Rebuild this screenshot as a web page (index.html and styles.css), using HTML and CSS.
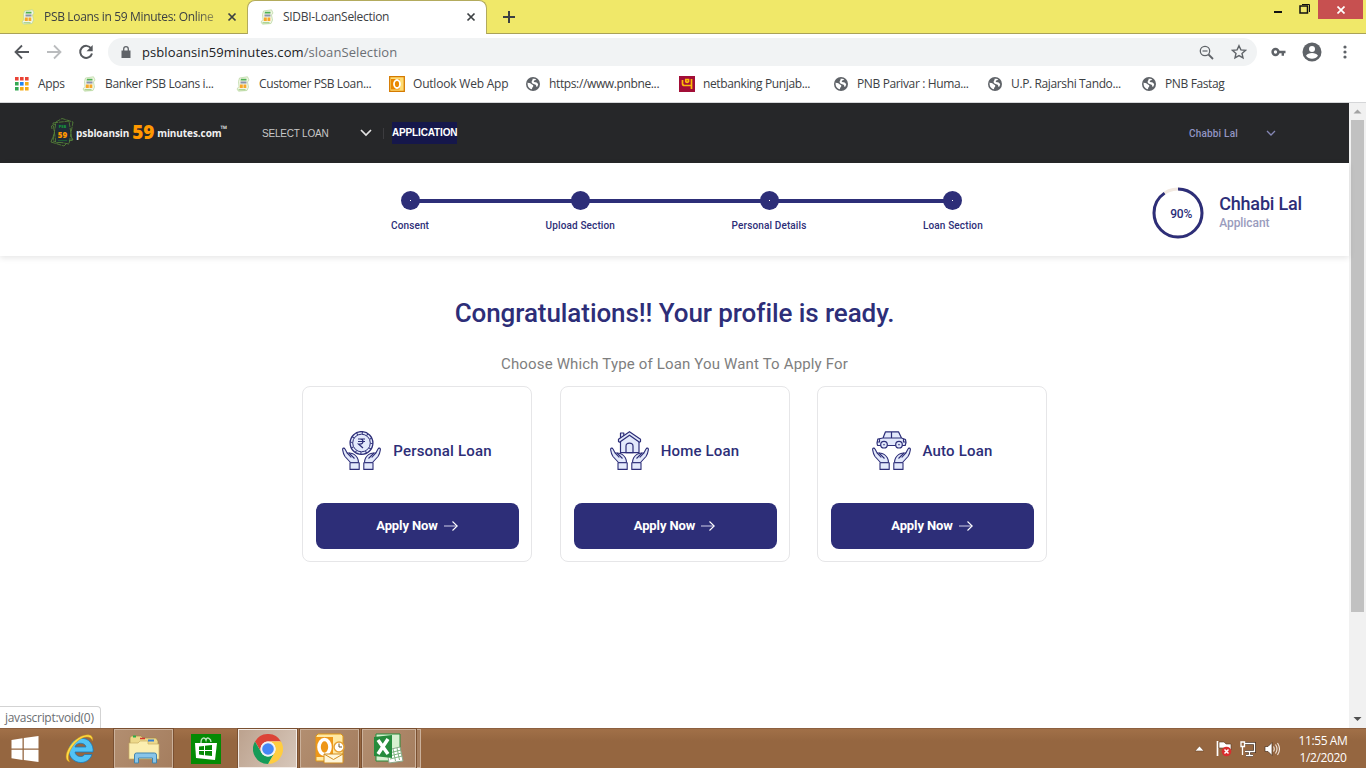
FILE: index.html
```html
<!DOCTYPE html>
<html lang="en">
<head>
<meta charset="utf-8">
<title>SIDBI-LoanSelection</title>
<link rel="stylesheet" href="styles.css">
</head>
<body>
<svg class="defs" width="0" height="0">
  <symbol id="fav" viewBox="0 0 16 16">
    <path d="M4.500 2 12.500.8l1.500 3.200-1.500 2 1 5-1.500 3.500-8.500.7-1.500-2.200 2-2.500-.5-5z" fill="#f3f6e4" stroke="#b4d59c" stroke-width=".7"/>
    <path d="M6 2.800h5.500v1.700H5.500z" fill="#4fb154"/><path d="M5.500 5.500h6v2h-6z" fill="#8a93ab"/>
    <path d="M5 8.500h2.800v3.500H4.700zM8.500 8.500h2.800v3.500H8.500z" fill="#f6a828"/><path d="M3.500 13.300h7v1h-7z" fill="#8fc673"/>
  </symbol>
  <symbol id="globe" viewBox="0 0 16 16">
    <circle cx="8" cy="8" r="7" fill="#5f6368"/>
    <path d="M2.700 6.500c1.200 1 2.400.2 3.300 1.300.6 1 2.200.7 2.300 1.900.1 1.500-1.500 1.500-1.300 3.600-3-.3-5-3.600-4.300-6.800zM7.500 2.800c1.200-.4 3 0 3.800.8-.7 1-2 .6-2.500 1.500-.5 1 1 1.200 2 1.200 1.300.2 1.500 1.400 2.400 1.600-.2 1.600-.8 2.500-1.600 3.200-.4-1.300-.4-2.300-1.700-2.600C8 8 6.500 7.300 6.600 5.800c.1-1.300 1.500-1.500.9-3z" fill="#fff"/>
  </symbol>
  <symbol id="x" viewBox="0 0 10 10"><path d="M1.500 1.500l7 7m0-7l-7 7" stroke="#3c4043" stroke-width="1.700"/></symbol>
  <symbol id="hands" viewBox="0 0 39 39">
    <g id="hand" fill="#e3e9fb" stroke="#2d2e78" stroke-width="1.100" stroke-linejoin="round">
      <path d="M8.500 31.500 3 25.500C1.700 23.800.9 20.500.6 18.600c-.1-1.800 1.800-2 2.400-.6L5 21.800l4 .4c3 .4 5 2.500 6.300 4.600.9 1.700 1.200 3 1.200 4.700z"/>
      <path d="M5 21.800l4.300 4.700M7 22l5.500 5.500" fill="none"/>
      <path d="M8 31.700h9.200v6.700H8z"/>
    </g>
    <use href="#hand" transform="matrix(-1 0 0 1 39 0)"/>
  </symbol>
  <symbol id="arrow" viewBox="0 0 16 12"><path d="M1 6h13" stroke="#b5b5d6" stroke-width="1.200"/><path d="M9.500 1.500 14.200 6l-4.700 4.500" stroke="#fff" stroke-width="1.100" fill="none"/></symbol>
</svg>

<header class="tabs">
  <div class="tab">
    <svg class="i16"><use href="#fav"/></svg><span class="tab-title t1">PSB Loans in 59 Minutes: Online</span><svg class="close"><use href="#x"/></svg>
  </div>
  <div class="tab active">
    <svg class="i16"><use href="#fav"/></svg><span class="tab-title t2">SIDBI-LoanSelection</span><svg class="close"><use href="#x"/></svg>
  </div>
  <svg class="plus" viewBox="0 0 12 12"><path d="M6 0v12M0 6h12" stroke="#3c4043" stroke-width="2"/></svg>
  <div class="window-buttons">
    <svg width="10" height="20"><path d="M1 12h8" stroke="#111" stroke-width="2"/></svg>
    <svg width="12" height="20" fill="none" stroke="#111"><path d="M1 6h7.500v7H1z" stroke-width="1.500"/><path d="M3 4.500h7.500V12"/></svg>
    <div class="win-close"><svg width="8" height="8"><path d="M.5.5l7 7m0-7l-7 7" stroke="#fff" stroke-width="1.700"/></svg></div>
  </div>
</header>

<div class="toolbar">
  <svg class="nav-ic" viewBox="0 0 16 16"><path d="M15 8H2M8 1.500 1.500 8 8 14.500" fill="none" stroke="#55585d" stroke-width="1.800"/></svg>
  <svg class="nav-ic" viewBox="0 0 16 16"><path d="M1 8h13M8 1.500 14.500 8 8 14.500" fill="none" stroke="#babcbe" stroke-width="1.800"/></svg>
  <svg class="nav-ic" viewBox="0 0 16 16"><path d="M13.200 4.500A6 6 0 1 0 14 9.500" fill="none" stroke="#55585d" stroke-width="2"/><path d="M14.700 1v6.200H8.500z" fill="#55585d"/></svg>
  <div class="omnibox">
    <svg width="10" height="13" viewBox="0 0 10 13"><path d="M.5 4.500h9V12h-9z" fill="#5f6368"/><path d="M2.700 5V3a2.300 2.300 0 0 1 4.600 0v2" fill="none" stroke="#5f6368" stroke-width="1.300"/></svg>
    <span class="url">psbloansin59minutes.com<i>/sloanSelection</i></span>
    <svg class="mag" width="15" height="15" fill="none" stroke="#5f6368"><circle cx="6" cy="6" r="4.700" stroke-width="1.300"/><path d="M3.500 6h5" stroke-width="1.200"/><path d="M9.500 9.500l4.500 4.500" stroke-width="1.800"/></svg>
    <svg width="16" height="16" viewBox="0 0 16 16"><path d="M8 1.700l1.900 4.200 4.500.5-3.400 3 1 4.500L8 11.600l-4 2.300 1-4.500-3.400-3 4.500-.5z" fill="none" stroke="#5f6368" stroke-width="1.400"/></svg>
  </div>
  <svg class="key" width="16" height="10"><path d="M8 3.700h6.500v2.600h-1.500v2.400h-2.400V6.300H8z" fill="#5f6368"/><circle cx="4.500" cy="5" r="2.900" fill="none" stroke="#5f6368" stroke-width="2.500"/></svg>
  <svg class="user" width="20" height="20"><circle cx="10" cy="10" r="9.500" fill="#5f6368"/><circle cx="10" cy="7" r="3" fill="#fff"/><path d="M4 13.700c2-3.500 10-3.500 12 0-2.500 4-9.500 4-12 0z" fill="#fff"/></svg>
  <svg width="4" height="14" fill="#5f6368"><circle cx="2" cy="2" r="1.600"/><circle cx="2" cy="7" r="1.600"/><circle cx="2" cy="12" r="1.600"/></svg>
</div>

<nav class="bookmarks">
  <a class="b-apps"><svg width="14" height="14"><path d="M0 0h3.600v3.600H0zM5 0h3.600v3.600H5zM10 0h3.600v3.600H10z" fill="#ea4335"/><path d="M0 5h3.600v3.600H0zM0 10h3.600v3.600H0z" fill="#34a853"/><path d="M5 5h3.600v3.600H5z" fill="#2286f3"/><path d="M10 5h3.600v3.600H10zM5 10h3.600v3.600H5zM10 10h3.600v3.600H10z" fill="#f5ac16"/></svg><span>Apps</span></a>
  <a class="b-long"><svg class="i16"><use href="#fav"/></svg><span>Banker PSB Loans i...</span></a>
  <a class="b-long"><svg class="i16"><use href="#fav"/></svg><span>Customer PSB Loan...</span></a>
  <a class="b-owa"><svg class="i16" viewBox="0 0 16 16"><path d="M.7.7h14.600v14.600H.7z" fill="#ffdc72" stroke="#d57a00" stroke-width="1.300"/><path d="M2 3h8.500v10.500H2z" fill="#e98700"/><ellipse cx="8" cy="8" rx="3" ry="4" fill="#e98700" stroke="#fff" stroke-width="1.800"/></svg><span>Outlook Web App</span></a>
  <a class="b-long"><svg class="i16"><use href="#globe"/></svg><span>https://www.pnbne...</span></a>
  <a class="b-long"><svg class="i16" viewBox="0 0 16 16"><path d="M0 0h16v16H0z" fill="#a20e37"/><path d="M3.500 4v3.500Q3.500 9.500 5.500 9.500H12M12.500 3v10M9.500 3.500H6.800v2.200Q8 7 9.500 5.700z" fill="none" stroke="#fbbc09" stroke-width="1.700"/></svg><span>netbanking Punjab...</span></a>
  <a class="b-long"><svg class="i16"><use href="#globe"/></svg><span>PNB Parivar : Huma...</span></a>
  <a class="b-long"><svg class="i16"><use href="#globe"/></svg><span>U.P. Rajarshi Tando...</span></a>
  <a class="b-long"><svg class="i16"><use href="#globe"/></svg><span>PNB Fastag</span></a>
</nav>

<div class="viewport">
  <div class="page">
    <div class="site-nav">
      <div class="logo">
        <svg width="25" height="30" viewBox="0 0 25 30"><g fill="none" stroke="#588a3b" stroke-width=".8" stroke-dasharray="5 .8"><path d="M3 5 19 3l3 19-16 3zM6 4l6-3.500L23 4l-4 22-16-3zM2 11l-.5-3L6 6M22 20l1 2-4 1M1 24l13 4 3-3M1 24l3-8"/></g><path d="M6 6h13v18H6z" fill="#202c35"/><path d="M8 22.500h9" stroke="#1e5b34"/></svg>
        <div class="logo-mark"><small>PSB</small><b>59</b></div>
        <span class="w1">psbloansin</span><span class="w59">59</span><span class="w2">minutes.com</span><span class="tm">™</span>
      </div>
      <span class="select">SELECT LOAN</span>
      <svg class="chev" width="12" height="8"><path d="M1 1 6 6l5-5" fill="none" stroke="#e3e3e3" stroke-width="1.700"/></svg>
      <span class="divider"></span>
      <span class="application">APPLICATION</span>
      <span class="account">Chabbi Lal</span>
      <svg width="10" height="7"><path d="M1 1l4 4 4-4" fill="none" stroke="#8587b4" stroke-width="1.300"/></svg>
    </div>

    <div class="progress">
      <div class="steps">
        <div class="line"></div>
        <div class="step"><i></i><span>Consent</span></div>
        <div class="step"><i class="plain"></i><span>Upload Section</span></div>
        <div class="step"><i></i><span>Personal Details</span></div>
        <div class="step"><i></i><span>Loan Section</span></div>
      </div>
      <div class="applicant">
        <div class="ring"><svg width="52" height="52"><circle cx="26" cy="26" r="24" fill="none" stroke="#f2e9e1" stroke-width="3"/><circle cx="26" cy="26" r="24" fill="none" stroke="#2d2e78" stroke-width="3" pathLength="100" stroke-dasharray="90.500 9.500" transform="rotate(-90 26 26)"/></svg><span>90%</span></div>
        <div class="who"><b>Chhabi Lal</b><span>Applicant</span></div>
      </div>
    </div>

    <main class="main">
      <h1>Congratulations!! Your profile is ready.</h1>
      <p>Choose Which Type of Loan You Want To Apply For</p>
      <div class="cards">
        <section class="card">
          <div class="kind">
            <svg width="39" height="39" viewBox="0 0 39 39"><use href="#hands"/><g fill="#e3e9fb" stroke="#2d2e78"><circle cx="19.500" cy="12" r="11.400" stroke-width="1.300"/><circle cx="19.500" cy="12" r="10" fill="none" stroke-width="2.200" stroke-dasharray="1 4.236"/><circle cx="19.500" cy="12" r="8.800"/><path d="M16 8h7m-7 2.500h7M16 8h2c4 0 4 5 0 5h-1.500l4.500 4" fill="none" stroke-width="1.200"/></g></svg>
            <span>Personal Loan</span>
          </div>
          <button>Apply Now<svg width="16" height="12"><use href="#arrow"/></svg></button>
        </section>
        <section class="card">
          <div class="kind">
            <svg width="39" height="39" viewBox="0 0 39 39"><use href="#hands"/><g fill="#e3e9fb" stroke="#2d2e78" stroke-width="1.200" stroke-linejoin="round"><path d="M10.500 8.500V2h3.300v4"/><path d="M10.500 10v11.700h18.500V10l-9.500-7z"/><path d="M8.500 10.500V8.200L19.500.7l11 7.500v2.300l-1 .7-10-7-10 7z"/><path d="M16 21.700v-6.500c0-4 7-4 7 0v6.500z"/></g></svg>
            <span>Home Loan</span>
          </div>
          <button>Apply Now<svg width="16" height="12"><use href="#arrow"/></svg></button>
        </section>
        <section class="card">
          <div class="kind">
            <svg width="39" height="39" viewBox="0 0 39 39"><use href="#hands"/><g fill="#e3e9fb" stroke="#2d2e78" stroke-width="1.200" stroke-linejoin="round"><path d="M11 7 13.500.8h13L29.500 7l4 1.500.5 3-.8 3H5.500L5 12l.8-4zM11 7h18.500M19.500 1v6M5 11h2.500v-3M34 11h-2.500V8"/><circle cx="12" cy="13.700" r="3.300"/><circle cx="12" cy="13.700" r=".5" stroke-width=".8"/><circle cx="27" cy="13.700" r="3.300"/><circle cx="27" cy="13.700" r=".5" stroke-width=".8"/></g></svg>
            <span>Auto Loan</span>
          </div>
          <button>Apply Now<svg width="16" height="12"><use href="#arrow"/></svg></button>
        </section>
      </div>
    </main>
    <div class="status">javascript:void(0)</div>
  </div>
  <div class="scrollbar">
    <svg width="17" height="17"><path d="M4.500 10.500h8L8.500 6.500z" fill="#a3a3a3"/></svg>
    <div class="thumb"></div>
    <svg class="down" width="17" height="17"><path d="M4.500 6h8l-4 4z" fill="#505050"/></svg>
  </div>
</div>

<footer class="taskbar">
  <div class="tb start"><svg width="28" height="26" viewBox="0 0 28 26"><path d="M.5 4 11.500 2.300v10.200H.5zM12.800 2.100 27.500 0v12.500H12.800zM.5 13.700h11v10.200L.5 22.300zM12.800 13.700h14.700V26l-14.700-2z" fill="#fff"/></svg></div>
  <div class="tb ie"><svg width="31" height="32" viewBox="0 0 31 32"><path d="M28 19H10c.5 5 8 6 9.500 2.500H27C24.500 29 17 31 11 28.500 3 25 2 15 7 9.500 12 4 21 4 25 9c2.500 3 3.500 6.500 3 10zM10 14h11c-.7-5-10-5-11 0z" fill="#52c3f5" stroke="#1b78b9" stroke-width=".8"/><path d="M5 29C-4 27 4 10 14 4.500 21 .5 29 .5 27.500 8 26 2 18 3 12 8.500 5 15 1 25 5 29z" fill="#ffdb45" stroke="#c68b13" stroke-width=".5"/></svg></div>
  <div class="tb win explorer"><svg width="34" height="32" viewBox="0 0 34 32"><path d="M3 5Q3 3 5 3h9l2 2h13l2 3v18H3z" fill="#edd98a" stroke="#a28847" stroke-width=".7"/><path d="M6 3.500h3" stroke="#28ae48" stroke-width="2"/><path d="M13 5.500h5" stroke="#d7352d" stroke-width="1.500"/><path d="M2 10h9l2-2h8v3h11v15H2z" fill="#fbeeb0" stroke="#c9ae62" stroke-width=".7"/><path d="M21 7.500h6" stroke="#357fd0" stroke-width="2"/><path d="M7.500 30V22q0-2 2-2h18q2 0 2 2v8h-4v-5h-14v5z" fill="#88c5e9" stroke="#4386ae"/></svg></div>
  <div class="tb store"><svg width="30" height="30"><path d="M0 0h30v30H0z" fill="#048a04"/><path d="M10 9c0-6 4-6 5-3 1-4 5-1 5 2" fill="none" stroke="#bde4bd" stroke-width="1.400"/><path d="M4 9h22l-2 17-19-2z" fill="#fff"/><path d="M8 12.500l5-.6v4.200H8zM14 11.800l7-.8v5.100h-7zM8 17h5v4.200l-5-.6zM14 17h7v5.100l-7-.8z" fill="#048a04"/></svg></div>
  <div class="tb win chrome"><svg width="30" height="30" viewBox="0 0 30 30"><circle cx="15" cy="15" r="14" fill="#fff"/><path d="M2 7.500A15 15 0 0 1 28 7.500H15a7.500 7.500 0 0 0-6.500 11.200z" fill="#dc4437"/><path d="M28 7.500A15 15 0 0 1 15 30l6.500-11.200A7.500 7.500 0 0 0 15 7.500z" fill="#ffcd40"/><path d="M2 7.500A15 15 0 0 0 15 30l6.500-11.200a7.500 7.500 0 0 1-13 0z" fill="#159b58"/><circle cx="15" cy="15" r="7.500" fill="#f1f1f1"/><circle cx="15" cy="15" r="5.800" fill="#4687f4"/></svg></div>
  <div class="tb win outlook"><svg width="31" height="31" viewBox="0 0 31 31"><path d="M4 1h23l2 2v25H2V3z" fill="#ffe9a4" stroke="#e19912"/><path d="M2 4h17v20H2z" fill="#ee9718"/><ellipse cx="10.500" cy="14" rx="5.500" ry="7.500" fill="none" stroke="#fff" stroke-width="3.600"/><path d="M10 21h19v9H10z" fill="#fff6d9" stroke="#d18e22"/><path d="M10 21l9.500 5.500L29 21" fill="none" stroke="#d18e22"/><circle cx="25" cy="14" r="5" fill="#fff" stroke="#e5a033" stroke-width="1.500"/><path d="M25 10.500V14h3" fill="none" stroke="#6b5630"/></svg></div>
  <div class="tb win excel"><svg width="31" height="31" viewBox="0 0 31 31"><path d="M3 1h24v27H3z" fill="#d7f0cf" stroke="#278b3b"/><path d="M14 17l13-3 3 14-14 2z" fill="#fff" stroke="#8cab8c"/><path d="M16 20l12-3M16.500 23l12-3M17 26l12-3M20 16l2.500 12M24 15l2.500 12" stroke="#7fb580"/><path d="M1 4l18-2v23L1 23z" fill="#268b3c"/><path d="M5 7l10 14M15 6 5 21" stroke="#fff" stroke-width="3.500"/></svg></div>
  <div class="stack"></div>
  <div class="tray">
    <svg width="9" height="7"><path d="M0 6h9L4.500 1z" fill="#fff" stroke="#6b4729" stroke-width=".6"/></svg>
    <svg width="18" height="18"><path d="M2.500 1v15" stroke="#fff" stroke-width="1.700"/><path d="M4 2h5l2 2h5v6h-5L9 8H4z" fill="#fff" stroke="#583920" stroke-width=".6"/><circle cx="11.500" cy="11.500" r="4.800" fill="#d92e2e"/><path d="M9.500 9.500l4 4m0-4l-4 4" stroke="#fff" stroke-width="1.500"/></svg>
    <svg width="18" height="18"><g fill="none" stroke="#493120" stroke-width="3"><path d="M6 3.500h9.500v8H6M10.500 12v3M7 15.500h7"/></g><g fill="none" stroke="#fff" stroke-width="1.300"><path d="M6 3.500h9.500v8H6M10.500 12v3M7 15.500h7M3.500 7v8M2 2h3.500v4.500H2z"/></g></svg>
    <svg width="18" height="18"><path d="M2 6.500h3l4-4v13l-4-4H2z" fill="#fff" stroke="#493120" stroke-width=".7"/><path d="M10.500 6.500q1.500 2.500 0 5M12.500 4.500q3 4.500 0 9M14.500 3q4 6 0 12" fill="none" stroke="#f5e9df" stroke-width="1.100"/></svg>
  </div>
  <div class="clock"><span class="time">11:55 AM</span><span class="date">1/2/2020</span></div>
</footer>
</body>
</html>
```
FILE: styles.css
```css
* { box-sizing: border-box; }
body { margin: 0; width: 1366px; height: 768px; overflow: hidden; display: flex; flex-direction: column; background: #fff; font-family: "Open Sans", "Noto Sans", sans-serif; font-size: 12px; color: #3c4043; }
svg { flex: none; display: block; }
span { white-space: nowrap; }
.defs { position: absolute; }
.i16 { width: 16px; height: 16px; }

.tabs { height: 34px; flex: none; display: flex; align-items: flex-start; background: #f0e869; border-bottom: 1px solid #aaa258; }
.tab { width: 247px; height: 33px; padding: 0 10px 0 20px; display: flex; align-items: center; gap: 8px; }
.tab.active { width: 240px; height: 34px; padding: 0 10px 1px 11px; background: #fff; border: 1px solid #b3ab5d; border-bottom: 0; border-radius: 8px 8px 0 0; }
.tab-title { flex: 1; line-height: 16px; }
.t1 { letter-spacing: -.33px; -webkit-mask-image: linear-gradient(90deg, #000 150px, rgba(0,0,0,.45) 172px); mask-image: linear-gradient(90deg, #000 150px, rgba(0,0,0,.45) 172px); }
.t2 { letter-spacing: -.3px; }
.close { width: 10px; height: 10px; }
.plus { width: 12px; height: 12px; margin: 11px 0 0 16px; }
.window-buttons { margin-left: auto; margin-right: 3px; display: flex; gap: 16px; }
.win-close { width: 45px; height: 19px; margin-left: -9px; background: #c75050; display: flex; align-items: center; justify-content: center; }

.toolbar { height: 36px; flex: none; padding: 0 19px 0 14px; display: flex; align-items: center; }
.nav-ic { width: 16px; height: 16px; margin-right: 16px; }
.omnibox { width: 1151px; height: 28px; margin-left: -2px; padding: 0 10px 0 13px; border-radius: 14px; background: #f1f3f4; display: flex; align-items: center; }
.url { margin-left: 11px; font-size: 13px; line-height: 18px; color: #202124; letter-spacing: .09px; }
.url i { font-style: normal; color: #6b6f74; }
.mag { margin-left: auto; margin-right: 17px; }
.key { margin-left: 14px; }
.user { margin: 0 21px 0 15px; }

.bookmarks { height: 33px; flex: none; padding: 0 0 5px 15px; display: flex; align-items: center; border-bottom: 1px solid #d5d6d8; }
.bookmarks a { display: flex; align-items: center; gap: 8px; letter-spacing: -.37px; }
.bookmarks .b-apps { width: 66px; gap: 9px; }
.bookmarks .b-long { width: 154px; }
.bookmarks .b-owa { width: 136px; letter-spacing: -.2px; }

.viewport { flex: 1; min-height: 0; display: flex; }
.page { position: relative; width: 1349px; display: flex; flex-direction: column; font-family: Roboto, sans-serif; color: #2d2e78; }
.scrollbar { width: 17px; background: #f1f1f1; display: flex; flex-direction: column; align-items: center; }
.thumb { width: 13px; height: 492px; background: #c1c1c1; }
.down { margin-top: auto; }

.site-nav { height: 60px; flex: none; padding: 0 73px 0 50px; display: flex; align-items: center; background: #262729; }
.logo { position: relative; width: 212px; display: flex; align-items: center; font-family: "Open Sans", sans-serif; font-weight: 700; color: #f0f0f0; }
.logo-mark { position: absolute; left: 7px; top: 6px; width: 11px; display: flex; flex-direction: column; align-items: center; line-height: 7px; font-size: 8px; color: #ff9800; }
.logo-mark small { font-size: 4px; line-height: 5px; color: #16a23b; }
.logo-mark b { margin-top: 2px; }
.w1, .w2 { font-size: 10px; letter-spacing: -.08px; }
.w1 { margin-left: 1px; }
.w59 { margin: 0 3px; font-size: 19px; line-height: 24px; font-weight: 800; color: #ff9800; position: relative; top: -1px; letter-spacing: -.2px; }
.tm { font-size: 9px; align-self: flex-start; line-height: 22px; margin-left: -1px; }
.select { width: 98px; font-family: "Liberation Sans", Arial, sans-serif; font-size: 10px; letter-spacing: -.2px; color: #c8c8c8; }
.divider { width: 1px; height: 11px; margin: 0 8px 0 11px; background: #3c3c3f; }
.application { height: 22px; line-height: 21px; background: #15174b; color: #fff; font-family: "Liberation Sans", Arial, sans-serif; font-size: 10px; font-weight: 700; letter-spacing: -.15px; }
.account { margin-left: auto; margin-right: 28px; font-size: 10px; font-weight: 500; letter-spacing: .2px; color: #9295c4; }

.progress { height: 93px; flex: none; padding: 0 47px 0 391px; display: flex; justify-content: space-between; align-items: center; box-shadow: 0 2px 6px rgba(0,0,0,.1); }
.steps { position: relative; display: flex; gap: 116.500px; padding-top: 5px; }
.line { position: absolute; left: 19px; right: 30px; top: 13px; height: 4px; background: #2d2e78; }
.step { display: flex; flex-direction: column; align-items: center; gap: 8px; font-size: 10px; font-weight: 500; line-height: 15px; letter-spacing: .13px; }
.step i { position: relative; width: 19px; height: 19px; border-radius: 50%; background: radial-gradient(circle, #fff 0 .7px, #2d2e78 .8px); }
.step i.plain { background: #2d2e78; }
.applicant { display: flex; align-items: center; gap: 15px; padding-top: 7px; }
.ring { position: relative; }
.ring span { position: absolute; left: 18px; top: 19px; font-size: 12px; line-height: 16px; font-weight: 500; letter-spacing: -.2px; }
.who { display: flex; flex-direction: column; }
.who b { font-size: 18px; line-height: 20px; font-weight: 500; letter-spacing: -.18px; }
.who span { font-size: 12px; line-height: 18px; font-weight: 500; letter-spacing: -.05px; color: #9a9cbd; }

.main { display: flex; flex-direction: column; align-items: center; padding-top: 40px; }
h1 { margin: 0; font-size: 26px; line-height: 34px; font-weight: 500; letter-spacing: -.08px; white-space: nowrap; }
p { margin: 24px 0 0; font-size: 15px; line-height: 20px; letter-spacing: .16px; color: #7e7e7e; white-space: nowrap; }
.cards { width: 745px; margin-top: 12px; display: flex; justify-content: space-between; }
.card { width: 230px; height: 176px; border: 1px solid #e6e6e8; border-radius: 8px; padding: 12px 13px 12px 13px; display: flex; flex-direction: column; justify-content: space-between; }
.kind { height: 103px; display: flex; align-items: center; justify-content: center; gap: 12px; font-size: 15px; font-weight: 500; letter-spacing: .18px; }
.card button { width: 203px; height: 46px; border: 0; padding: 0 0 1px; border-radius: 8px; background: #2d2e78; color: #fff; font: 700 13px Roboto, sans-serif; letter-spacing: -.1px; display: flex; align-items: center; justify-content: center; gap: 5px; }
.status { position: absolute; left: 0; bottom: 0; width: 101px; height: 22px; padding-left: 5px; border: 1px solid #d3d3d3; border-left: 0; border-bottom: 0; border-radius: 0 4px 0 0; background: #fff; font-family: "Open Sans", sans-serif; font-size: 12px; line-height: 21px; letter-spacing: -.3px; color: #6a6d71; }

.taskbar { height: 40px; flex: none; display: flex; background: linear-gradient(#a17048, #956640 30%, #956640); border-top: 1px solid #8d6040; }
.tb { display: flex; align-items: center; justify-content: center; height: 39px; }
.win { width: 59px; background: linear-gradient(120deg, #b28e70, #a57e5f); border: 1px solid #cbb19b; outline: 1px solid #7a5031; }
.start { width: 50px; }
.ie { width: 64px; padding-right: 3px; }
.store { width: 65px; }
.win.chrome { background: linear-gradient(120deg, #bca28e, #d7c7ba); border-color: #f3ece7; }
.win.outlook { margin-left: 3px; }
.win.excel { width: 54px; margin-left: 3px; padding-right: 2px; }
.stack { width: 4px; margin-left: 1px; border: 1px solid #cbb19b; border-left: 0; background: #a57e5f; }
.tray { margin-left: auto; display: flex; align-items: center; gap: 6px; }
.tray > svg:first-child { margin-right: 5px; }
.clock { width: 85px; padding: 3px 1px 0 0; display: flex; flex-direction: column; align-items: center; line-height: 17px; color: #fff; font-size: 12px; letter-spacing: -.4px; }
```
